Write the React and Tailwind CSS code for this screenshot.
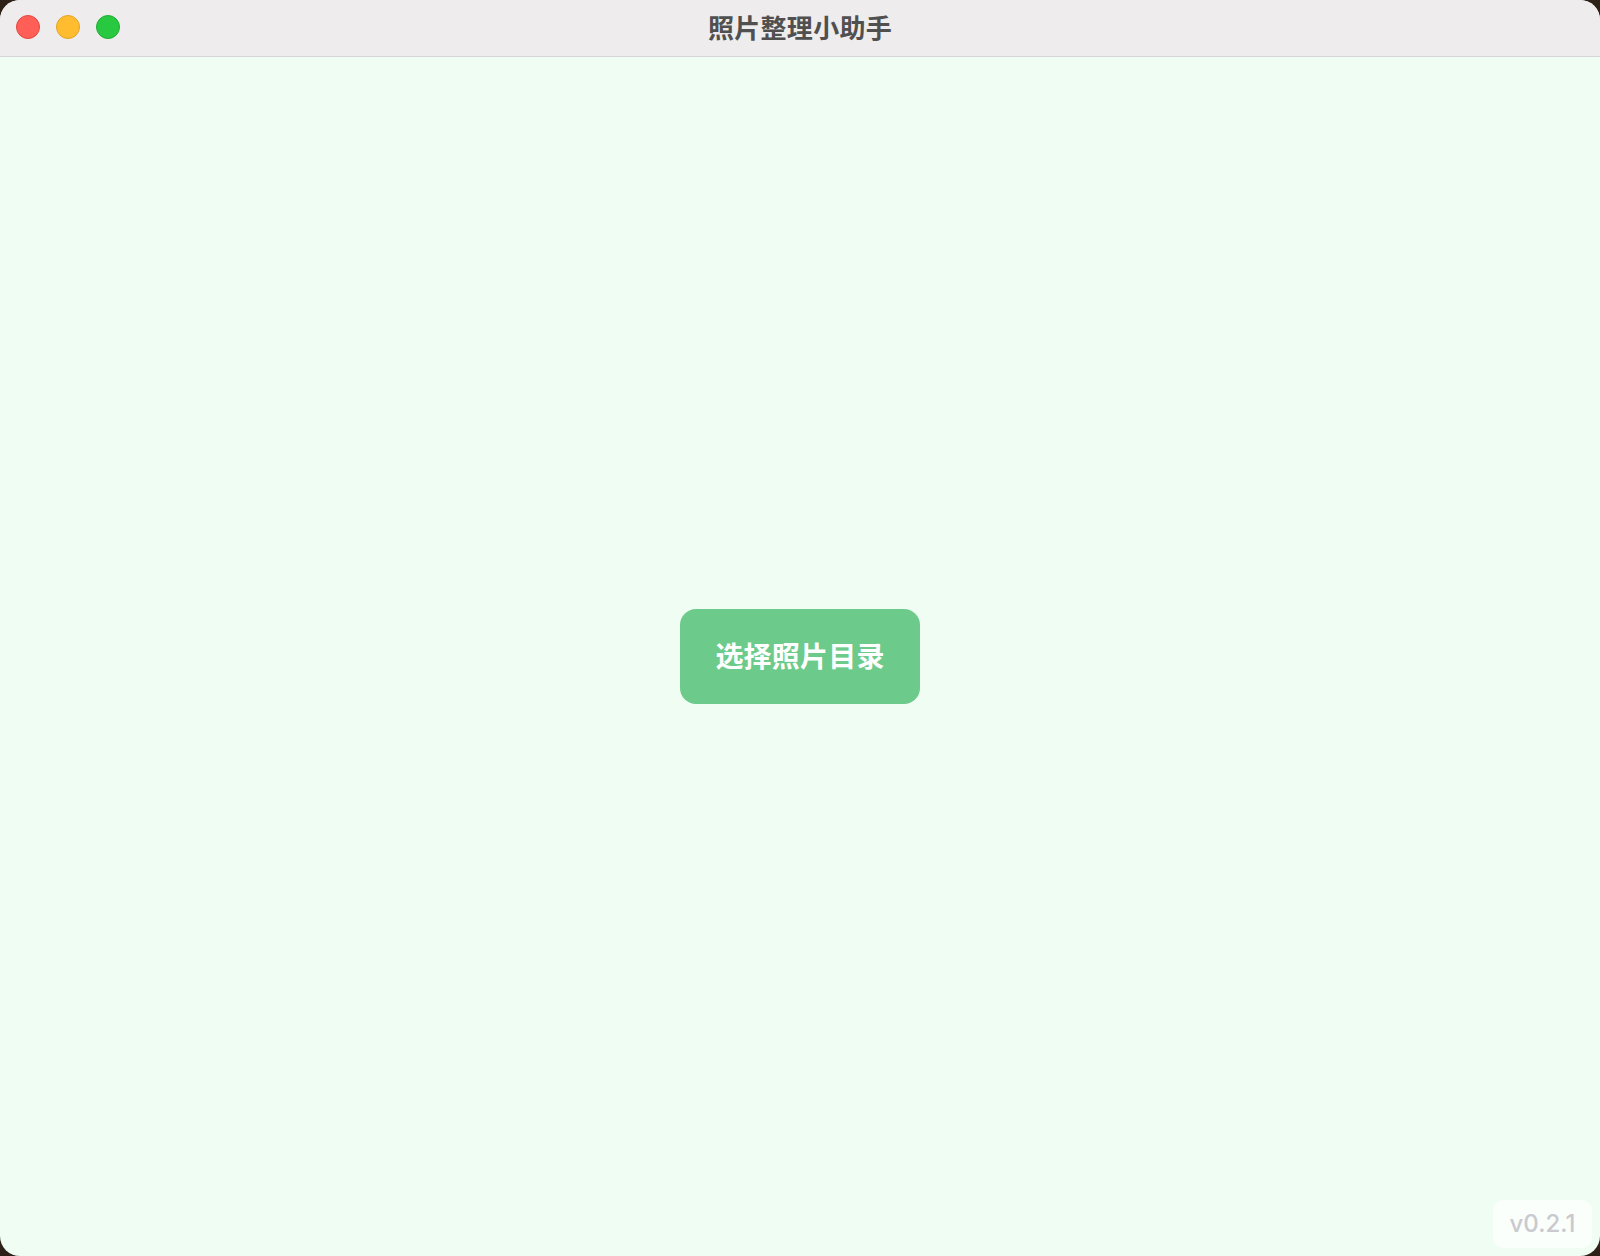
import React from "react";

export default function App() {
  return (
    <div className="w-[1600px] h-[1256px] bg-[#2e2118]" style={{ fontFamily: '"Noto Sans CJK SC", "Noto Sans", sans-serif' }}>
      <div className="w-full h-full rounded-[20px] overflow-hidden flex flex-col bg-[#effdf3]">
        <div className="relative h-[57px] shrink-0 bg-[#eeeced] border-b border-[#d6d6d6] flex items-center justify-center">
          <div className="absolute left-[16px] top-[15px] flex gap-[16px]">
            <span className="block w-[24px] h-[24px] rounded-full bg-[#ff5f57] border border-[#e2463f]" />
            <span className="block w-[24px] h-[24px] rounded-full bg-[#febc2e] border border-[#e1a325]" />
            <span className="block w-[24px] h-[24px] rounded-full bg-[#28c840] border border-[#1fad34]" />
          </div>
          <span className="text-[26px] font-semibold text-[#505050] leading-none tracking-[0.3px] mt-[-2px]">照片整理小助手</span>
        </div>
        <div className="relative flex-1 flex items-center justify-center">
          <button className="w-[240px] h-[95px] rounded-[16px] bg-[#6ccb8b] text-white text-[28px] font-bold leading-none tracking-[0.2px] pb-[3px]">
            选择照片目录
          </button>
          <div className="absolute right-[8px] bottom-[8px] w-[99px] h-[48px] rounded-[10px] bg-white/70 flex items-center justify-center">
            <span className="text-[24px] font-medium text-[#c9c9ce] leading-none" style={{ fontFamily: 'Inter, "Liberation Sans", sans-serif' }}>v0.2.1</span>
          </div>
        </div>
      </div>
    </div>
  );
}
